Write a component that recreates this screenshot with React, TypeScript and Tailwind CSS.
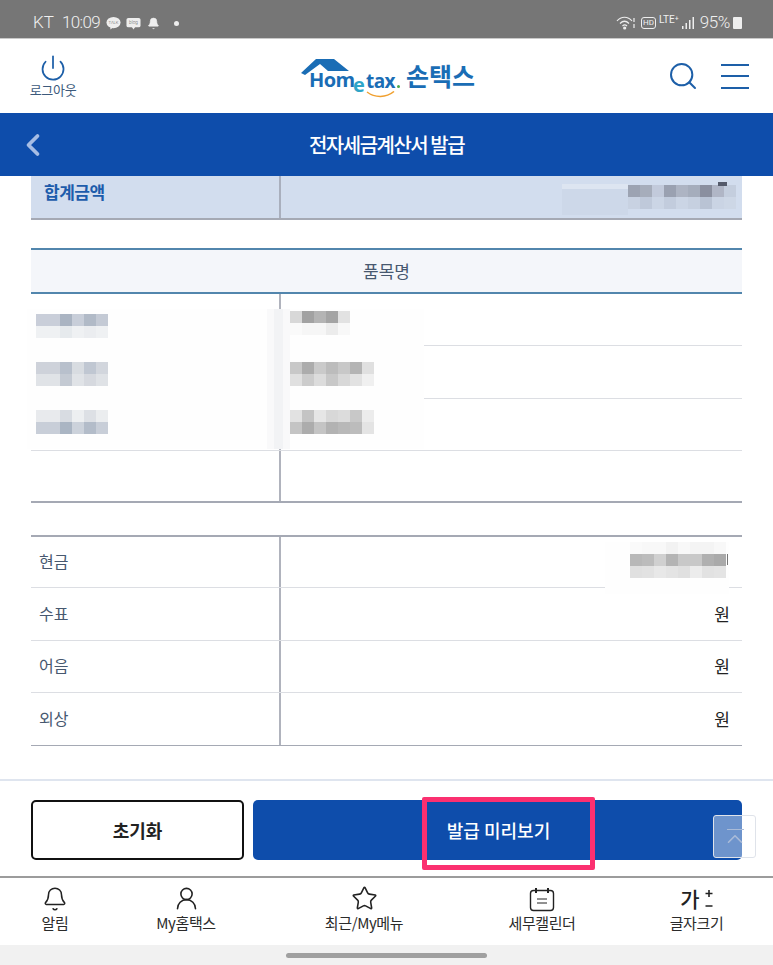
import { Bell, ChevronLeft, ChevronUp, Search, Star, UserRound, Power } from 'lucide-react'

const font = "font-['Noto_Sans_CJK_KR','Noto_Sans',sans-serif]"

function Blur({ cells, className = '' }: { cells: string[][]; className?: string }) {
  // pixelated mosaic over private values
  return (
    <div className={`flex flex-col ${className}`}>
      {cells.map((row, i) => (
        <div key={i} className="flex">
          {row.map((c, j) => (
            <div key={j} className="w-3 h-3" style={{ background: c }} />
          ))}
        </div>
      ))}
    </div>
  )
}

const nameA = [
  ['#c9ced9', '#c9ced9', '#aab4c2', '#c8ced9', '#b1bac7', '#c4cad5'],
  ['#eff1f3', '#eff1f3', '#e6eaed', '#eff1f3', '#ebedf0', '#eff1f3'],
]
const nameB = [
  ['#ced2da', '#ced2da', '#b8c0cc', '#d8dce1', '#c0c7d2', '#d2d6dd'],
  ['#e0e3e7', '#e0e3e7', '#c4cad3', '#e0e3e7', '#d6d9df', '#dfe2e6'],
]
const nameC = [
  ['#e8eaed', '#e8eaed', '#d8dce2', '#edeff1', '#dde0e5', '#ebedef'],
  ['#c8ced8', '#c8ced8', '#aab5c3', '#ccd2db', '#b3bcc9', '#c8ced8'],
]
const priceA = [
  ['#d8d8d8', '#a2a2a2', '#b4b4b4', '#a4a4a4', '#e2e2e2'],
  ['#fafafa', '#f6f6f6', '#f6f6f6', '#ececec', '#f8f8f8'],
]
const priceB = [
  ['#c8c8c8', '#acacac', '#cacaca', '#bcbcbc', '#c8c8c8', '#b4b4b4', '#e0e0e0'],
  ['#e0e0e0', '#cccccc', '#dcdcdc', '#c8c8c8', '#d8d8d8', '#e2e2e2', '#f0f0f0'],
]
const priceC = [
  ['#e2e2e2', '#c4c4c4', '#e6e6e6', '#d8d8d8', '#dcdcdc', '#c8c8c8', '#ececec'],
  ['#c4c4c4', '#acacac', '#c4c4c4', '#b2b2b2', '#b8b8b8', '#bcbcbc', '#e4e4e4'],
]
const cash = [
  ['#fafafa', '#f8f8f8', '#f8f8f8', '#f2f2f2', '#f8f8f8', '#f4f4f4', '#f4f4f4', '#f8f8f8'],
  ['#b8b8b8', '#bcbcbc', '#d0d0d0', '#b4b4b4', '#c8c8c8', '#c8c8c8', '#b0b0b0', '#aaaaaa'],
  ['#e0e0e0', '#e2e2e2', '#e8e8e8', '#e4e4e4', '#e0e0e0', '#ececec', '#e2e2e2', '#e4e4e4'],
]
const total = [
  ['#9ca3b2', '#a6adbb', '#c2cadb', '#9aa1b1', '#adb4c3', '#a5adbc', '#8a8f9f', '#b0b6c6', '#c4cede'],
  ['#c8d2e2', '#bfc9da', '#cbd5e5', '#c2ccdd', '#cbd5e5', '#c6d0e0', '#b9c3d4', '#cad4e4', '#cdd7e6'],
]

function MoneyRow({ label, children, last, className = 'h-[52.5px]' }: { label: string; children?: React.ReactNode; last?: boolean; className?: string }) {
  return (
    <div className={`flex relative border-b ${className} ${last ? 'border-[#a5a9b4]' : 'border-[#dcdee3]'}`}>
      <div className="w-[250px] border-r-2 border-[#b0b3bd] pl-2 pb-[2px] flex items-center text-[16px] text-[#47586f]">{label}</div>
      <div className="flex-1 flex items-center justify-end pr-[12px] pb-[1px] text-[17px] text-[#222]">{children ?? '원'}</div>
    </div>
  )
}

function NavItem({ icon, label, className = '' }: { icon: React.ReactNode; label: string; className?: string }) {
  return (
    <div className={`flex flex-col items-center ${className}`}>
      <div className="h-[28px] flex items-end justify-center">{icon}</div>
      <span className="text-[15px] leading-[20px] mt-[1px] tracking-[-0.4px] text-[#2b2b2b]">{label}</span>
    </div>
  )
}

export default function App() {
  return (
    <div className={`w-[773px] h-[965px] bg-white flex flex-col overflow-hidden relative ${font}`}>
      {/* status bar */}
      <div className="h-[39px] shrink-0 bg-[#767676] border-b border-[#c9c9c9] flex items-center justify-between pl-[33px] pr-[31px] pt-[8px] text-[#f0f0f0]">
        <div className="flex items-center text-[17px] font-['Roboto'] font-light">
          <span>KT</span>
          <span className="ml-[8px] tracking-[-0.6px]">10:09</span>
          <svg width="15" height="15" viewBox="0 0 16 15" className="ml-[6px]">
            <ellipse cx="8" cy="6.5" rx="7.5" ry="6" fill="#eee" />
            <path d="M5 10 L4.5 14 L9 11 Z" fill="#eee" />
            <text x="8" y="8" textAnchor="middle" fontSize="4.5" fill="#666" fontFamily="Roboto">TALK</text>
          </svg>
          <svg width="15" height="15" viewBox="0 0 16 15" className="ml-[5px]">
            <rect x="0.5" y="1.5" width="15" height="10" rx="2" fill="#eee" />
            <path d="M6 11 L8 14 L10 11 Z" fill="#eee" />
            <text x="8" y="8.5" textAnchor="middle" fontSize="5" fill="#666" fontFamily="Roboto">blog</text>
          </svg>
          <Bell size={13} fill="#eee" strokeWidth={1} className="ml-[6px]" />
          <span className="w-[5px] h-[5px] rounded-full bg-[#eee] ml-[14px]" />
        </div>
        <div className="flex items-center text-[17px]">
          <svg width="20" height="14" viewBox="0 0 20 14" fill="none" stroke="#eee" strokeWidth="1.2">
            <path d="M1 5 C5 0 12 0 16 5 M4 7.5 C7 4.5 10 4.5 13 7.5 M6.5 10 C8 8.5 9.5 8.5 11 10" />
            <circle cx="8.7" cy="12" r="1" fill="#eee" />
            <path d="M18 2 V6 M18 8 V12" />
          </svg>
          <span className="ml-[5px] border border-[#eee] rounded-[3px] text-[8px] leading-[10px] px-[1px] font-['Roboto']">HD</span>
          <span className="ml-[3px] text-[10px] leading-[10px] font-['Roboto'] -mt-[6px]">LTE⁺</span>
          <svg width="13" height="12" viewBox="0 0 13 12" fill="#eee" className="ml-[3px]">
            <rect x="0" y="9" width="1.5" height="3" />
            <rect x="3.5" y="6" width="1.5" height="6" />
            <rect x="7" y="3" width="1.5" height="9" />
            <rect x="10.5" y="0" width="1.5" height="12" />
          </svg>
          <span className="font-['Roboto'] font-light ml-[5px] tracking-[-0.4px]">95%</span>
          <span className="w-[9px] h-[12px] bg-[#eee] rounded-[1px] ml-[3px]" />
        </div>
      </div>

      {/* header */}
      <div className="h-[74px] shrink-0 flex items-center justify-between pl-[29px] pr-[24px]">
        <div className="flex flex-col items-center w-[48px] -mt-[2px]">
          <Power size={28} strokeWidth={1.5} className="text-[#1d5fa8]" />
          <span className="text-[13px] leading-[14px] mt-[1px] tracking-[-0.3px] text-[#3c5a7c]">로그아웃</span>
        </div>
        <div className="flex items-center ml-[32px]">
          <div className="relative w-[100px] h-[40px]">
            <svg width="60" height="24" viewBox="0 0 60 24" className="absolute left-0 top-0">
              <path d="M0 17 L15 3 H33 L48 15 H27 L19 8 L4 19 Z" fill="#1a6db5" />
            </svg>
            <span className="absolute left-[8px] top-[10px] text-[20px] leading-[28px] font-bold tracking-[-0.6px] text-[#1a6db5] font-['Open_Sans']">Hom</span>
            <span className="absolute left-[52px] top-[15px] text-[20px] leading-[28px] font-bold text-[#2ea5c8] font-['Open_Sans']">e</span>
            <span className="absolute left-[65px] top-[11px] text-[19px] leading-[28px] font-bold tracking-[-0.6px] text-[#1a6db5] font-['Open_Sans']">tax</span>
            <span className="absolute left-[96px] top-[29px] w-[3px] h-[3px] bg-[#4aa84a] rounded-full" />
            <svg width="30" height="8" viewBox="0 0 30 8" className="absolute left-[65px] top-[35px]" fill="none">
              <path d="M1 1 C9 7 20 7 28 0.5" stroke="#f0a030" strokeWidth="1.5" />
            </svg>
          </div>
          <span className="ml-[5px] text-[25px] font-bold text-[#1a6db5]">손택스</span>
        </div>
        <div className="flex items-center gap-[22px]">
          <Search size={32} strokeWidth={1.5} className="text-[#1d5fa8]" />
          <div className="flex flex-col justify-between w-[28px] h-[25px]">
            <span className="h-[2px] bg-[#1d5fa8]" />
            <span className="h-[2px] bg-[#1d5fa8]" />
            <span className="h-[2px] bg-[#1d5fa8]" />
          </div>
        </div>
      </div>

      {/* title bar */}
      <div className="h-[63px] shrink-0 bg-[#0e4dab] relative flex items-center justify-center">
        <ChevronLeft size={36} strokeWidth={2.5} className="absolute left-[15px] text-[#a6bde4]" />
        <span className="text-white text-[20px] font-medium tracking-[-1.5px]">전자세금계산서 발급</span>
      </div>

      {/* content */}
      <div className="flex-1 px-[31px]">
        <div className="flex h-[44px] bg-[#d2ddee] border-b-2 border-[#a5a9b4]">
          <div className="w-[250px] border-r-2 border-[#a9afbd] pl-[13px] pt-[1px] text-[17px] font-bold tracking-[-0.5px] text-[#1d5cab] leading-[30px]">합계금액</div>
          <div className="flex-1 flex justify-end pr-[6px] pt-[9px] relative">
            <div className="w-[66px] h-[31px] mt-[-1px] bg-[#cdd8e9] border-t-[5px] border-[#dde5f1]" />
            <Blur cells={total} />
            <span className="absolute right-[15px] top-[6px] w-[9px] h-[4px] bg-[#555b6b]" />
          </div>
        </div>

        <div className="mt-[28px] h-[46px] bg-[#f4f6fa] border-y-2 border-[#5286ad] flex items-center justify-center text-[17px] text-[#47586f]">품목명</div>

        <div className="relative">
          {[0, 1, 2, 3].map(i => (
            <div key={i} className={`flex h-[52.25px] border-b ${i === 3 ? 'border-[#a5a9b4] border-b-2' : 'border-[#dcdee3]'}`}>
              <div className="w-[250px] border-r-2 border-[#b0b3bd]" />
              <div className="flex-1" />
            </div>
          ))}
          {/* mosaic patch that covers the item rows */}
          <div className="absolute left-[-4px] top-[15px] w-[397px] h-[140px] bg-[#fefefe] flex">
            <div className="w-[240px] pl-[9px] pt-[5px] flex flex-col gap-[24px]">
              <Blur cells={nameA} />
              <Blur cells={nameB} />
              <Blur cells={nameC} />
            </div>
            <div className="w-[23px] bg-[#f9f9fa] flex justify-center">
              <span className="w-[9px] h-full bg-[#f2f3f5]" />
            </div>
            <div className="pt-[2px] flex flex-col">
              <Blur cells={priceA} />
              <Blur cells={priceB} className="mt-[27px]" />
              <Blur cells={priceC} className="mt-[24px]" />
            </div>
          </div>
        </div>

        <div className="mt-[32px] border-t-2 border-[#a5a9b4]">
          <MoneyRow label="현금" className="h-[51px]">
            <div className="absolute right-[13px] top-[5px] w-[124px] h-[52px] bg-[#fefefe] flex justify-end pr-[3px]">
              <Blur cells={cash} />
              <span className="absolute right-[1px] top-[12px] w-[1px] h-[11px] bg-[#777]" />
            </div>
          </MoneyRow>
          <MoneyRow label="수표" />
          <MoneyRow label="어음" />
          <MoneyRow label="외상" last />
        </div>
      </div>

      {/* actions */}
      <div className="h-[97px] shrink-0 border-t-2 border-[#dfe5ef] flex gap-[9px] px-[31px] pt-[19px] relative">
        <button className="w-[213px] h-[60px] bg-white border-[2px] border-[#111] rounded-[5px] text-[18px] font-bold text-[#222]">초기화</button>
        <button className="flex-1 h-[60px] bg-[#0e4dab] rounded-[5px] text-white text-[18px] font-medium pl-[2px]">발급 미리보기</button>
        <div className="absolute left-[713px] top-[34px] w-[43px] h-[43px] rounded-[3px] bg-white/40 border border-[#dfe3ea] flex items-center justify-center text-[#a9bbd8]">
          <ChevronUp size={26} strokeWidth={1.5} className="mt-[4px]" />
          <span className="absolute top-[13px] left-[13px] w-[17px] h-[1px] bg-[#a9bbd8]" />
        </div>
        <div className="absolute left-[422px] top-[16px] w-[173px] h-[73px] rounded-[2px] border-[5px] border-[#fb3070]" />
      </div>

      {/* bottom nav */}
      <div className="h-[69px] shrink-0 border-t-2 border-[#9c9c9c] flex pt-[6px] text-[#222]">
        <NavItem className="w-[110px]" label="알림" icon={<Bell size={26} strokeWidth={1.4} />} />
        <NavItem className="w-[152px]" label="My홈택스" icon={<UserRound size={27} strokeWidth={1.4} />} />
        <NavItem className="w-[204px]" label="최근/My메뉴" icon={<Star size={27} strokeWidth={1.4} />} />
        <NavItem className="w-[152px]" label="세무캘린더" icon={
          <svg width="26" height="25" viewBox="0 0 26 25" fill="none" stroke="#222" strokeWidth="1.4">
            <rect x="1.5" y="3.5" width="23" height="20" rx="3" />
            <path d="M7 1 V6 M19 1 V6" strokeWidth="2" />
            <path d="M8 12 H18 M8 16 H18" strokeWidth="1" />
          </svg>
        } />
        <NavItem className="w-[155px] pl-[2px]" label="글자크기" icon={
          <span className="flex items-center h-[28px] -mt-[2px]">
            <span className="text-[21px] leading-[24px] font-medium">가</span>
            <svg width="8" height="19" viewBox="0 0 8 19" fill="none" stroke="#222" strokeWidth="1.6" className="ml-[5px]">
              <path d="M4 1 V8 M0.5 4.5 H7.5 M0.5 17 H7.5" />
            </svg>
          </span>
        } />
      </div>

      {/* gesture bar */}
      <div className="h-[20px] shrink-0 bg-[#f1f1f1] flex items-center justify-center">
        <span className="w-[201px] h-[5px] rounded-full bg-[#a0a0a0]" />
      </div>
    </div>
  )
}
